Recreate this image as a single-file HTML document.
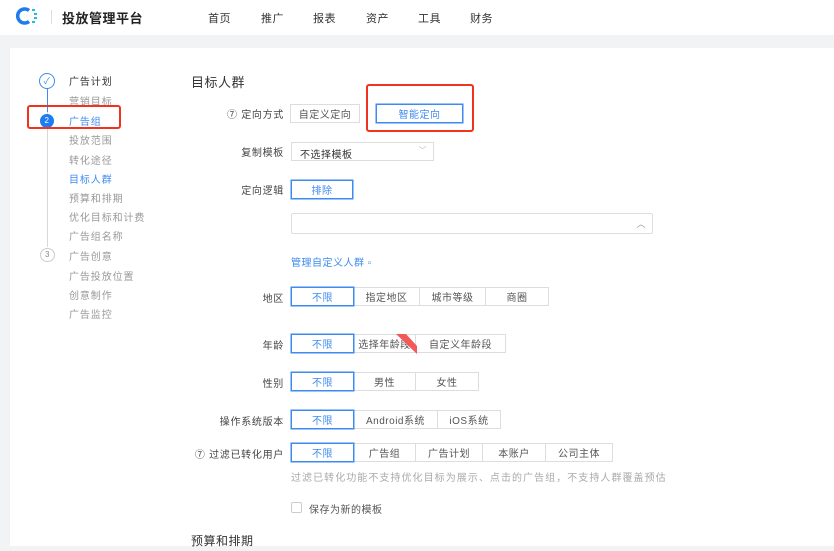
<!DOCTYPE html>
<html><head><meta charset="utf-8"><style>
*{margin:0;padding:0;box-sizing:border-box}
body{width:834px;height:551px;overflow:hidden;background:#f2f3f5;font-family:"Liberation Sans","Noto Sans CJK SC",sans-serif;position:relative;color:#333;letter-spacing:.5px}
.a{position:absolute;white-space:nowrap}
.hdr{position:absolute;left:0;top:0;width:834px;height:35px;background:#fff}
.card{position:absolute;left:10px;top:48px;width:824px;height:498px;background:#fff}
.nav{font-size:11px;color:#333;top:10px}
.st{font-size:10px;color:#999;left:69px;letter-spacing:.9px}
.lbl{font-size:10px;color:#444;text-align:right;right:550px;letter-spacing:.7px}
.grp{position:absolute;display:flex;height:19px}
.grp div{border:1px solid #ddd;margin-left:-1px;font-size:10px;color:#555;display:flex;align-items:center;justify-content:center;background:#fff}
.grp div.on{border:1px solid #3d8bef;color:#3d8bef;z-index:2;box-shadow:0 0 0 .5px #3d8bef}
</style></head><body>
<div class="hdr"></div>
<svg class="a" style="left:15px;top:6px" width="26" height="20" viewBox="0 0 26 20"><path d="M14 4.5A7 7 0 1 0 14 15.5" stroke="#1e7cf2" stroke-width="3.5" fill="none"/><g fill="#19c0e8"><rect x="17" y="3" width="3" height="2"/><rect x="19" y="7" width="3" height="2"/><rect x="19" y="11" width="3" height="2"/><rect x="17" y="15" width="3" height="2"/></g></svg>
<div class="a" style="left:51px;top:10px;width:1px;height:14px;background:#ddd"></div>
<div class="a" style="left:62px;top:8px;font-size:13px;font-weight:bold;color:#222">投放管理平台</div>
<div class="a nav" style="left:208px">首页</div>
<div class="a nav" style="left:261px">推广</div>
<div class="a nav" style="left:313px">报表</div>
<div class="a nav" style="left:366px">资产</div>
<div class="a nav" style="left:418px">工具</div>
<div class="a nav" style="left:470px">财务</div>
<div class="card"></div>
<div class="a" style="left:47px;top:87px;width:1px;height:160px;background:#d8d8d8"></div>
<div class="a" style="left:47px;top:87px;width:1px;height:25px;background:#3d8bef"></div>
<div class="a" style="left:39px;top:73px;width:16px;height:16px;border:1px solid #3d8bef;border-radius:50%;background:#fff;color:#3d8bef;font-size:9px;text-align:center;line-height:14px">✓</div>
<div class="a" style="left:40px;top:114px;width:14px;height:14px;border-radius:50%;background:#1e7cf2;color:#fff;font-size:8px;text-align:center;line-height:14px">2</div>
<div class="a" style="left:40px;top:248px;width:15px;height:14px;border:1px solid #ccc;border-radius:50%;background:#fff;color:#888;font-size:8px;text-align:center;line-height:12px">3</div>
<div class="a st" style="top:73px;color:#333">广告计划</div>
<div class="a st" style="top:93px">营销目标</div>
<div class="a st" style="top:113px;color:#3d8bef">广告组</div>
<div class="a st" style="top:132px">投放范围</div>
<div class="a st" style="top:152px">转化途径</div>
<div class="a st" style="top:171px;color:#3d8bef">目标人群</div>
<div class="a st" style="top:190px">预算和排期</div>
<div class="a st" style="top:209px">优化目标和计费</div>
<div class="a st" style="top:228px">广告组名称</div>
<div class="a st" style="top:248px">广告创意</div>
<div class="a st" style="top:268px">广告投放位置</div>
<div class="a st" style="top:287px">创意制作</div>
<div class="a st" style="top:306px">广告监控</div>
<div class="a" style="left:27px;top:105px;width:94px;height:24px;border:2px solid #f0331f;border-radius:3px"></div>
<div class="a" style="left:191px;top:72px;font-size:13px;color:#333">目标人群</div>
<div class="a lbl" style="top:106px">⑦ 定向方式</div>
<div class="grp" style="left:291px;top:104px"><div style="width:70px">自定义定向</div></div>
<div class="grp" style="left:376px;top:104px"><div class="on" style="width:87px;margin:0">智能定向</div></div>
<div class="a" style="left:366px;top:84px;width:108px;height:48px;border:2px solid #f0331f;border-radius:3px"></div>
<div class="a lbl" style="top:144px">复制模板</div>
<div class="a" style="left:291px;top:142px;width:143px;height:19px;border:1px solid #ddd;font-size:10px;padding:3px 8px;color:#333">不选择模板<span style="position:absolute;right:6px;top:2px;color:#bbb;font-size:8px">﹀</span></div>
<div class="a lbl" style="top:182px">定向逻辑</div>
<div class="grp" style="left:291px;top:180px"><div class="on" style="width:62px;margin:0">排除</div></div>
<div class="a" style="left:291px;top:213px;width:362px;height:21px;border:1px solid #ddd;border-radius:2px"><span style="position:absolute;right:6px;top:3px;color:#999;font-size:9px">︿</span></div>
<div class="a" style="left:291px;top:254px;font-size:10px;color:#3d8bef">管理自定义人群 ▫</div>
<div class="a lbl" style="top:290px">地区</div>
<div class="grp" style="left:291px;top:287px"><div class="on" style="width:63px;margin:0">不限</div><div style="width:67px">指定地区</div><div style="width:67px">城市等级</div><div style="width:64px">商圈</div></div>
<div class="a lbl" style="top:337px">年龄</div>
<div class="grp" style="left:291px;top:334px"><div class="on" style="width:63px;margin:0">不限</div><div style="width:63px">选择年龄段</div><div style="width:91px">自定义年龄段</div></div>
<svg class="a" style="left:396px;top:334px" width="21" height="20"><path d="M0 0H10L21 12V20Z" fill="#f05a5a"/></svg>
<div class="a lbl" style="top:375px">性别</div>
<div class="grp" style="left:291px;top:372px"><div class="on" style="width:63px;margin:0">不限</div><div style="width:63px">男性</div><div style="width:64px">女性</div></div>
<div class="a lbl" style="top:413px">操作系统版本</div>
<div class="grp" style="left:291px;top:410px"><div class="on" style="width:63px;margin:0">不限</div><div style="width:85px">Android系统</div><div style="width:64px">iOS系统</div></div>
<div class="a lbl" style="top:446px">⑦ 过滤已转化用户</div>
<div class="grp" style="left:291px;top:443px"><div class="on" style="width:63px;margin:0">不限</div><div style="width:63px">广告组</div><div style="width:68px">广告计划</div><div style="width:64px">本账户</div><div style="width:68px">公司主体</div></div>
<div class="a" style="left:291px;top:469px;font-size:10px;color:#aaa;letter-spacing:1.05px">过滤已转化功能不支持优化目标为展示、点击的广告组，不支持人群覆盖预估</div>
<div class="a" style="left:291px;top:502px;width:11px;height:11px;border:1px solid #ccc;border-radius:2px"></div>
<div class="a" style="left:309px;top:501px;font-size:10px;color:#555">保存为新的模板</div>
<div class="a" style="left:191px;top:532px;font-size:12px;color:#333">预算和排期</div>
</body></html>
